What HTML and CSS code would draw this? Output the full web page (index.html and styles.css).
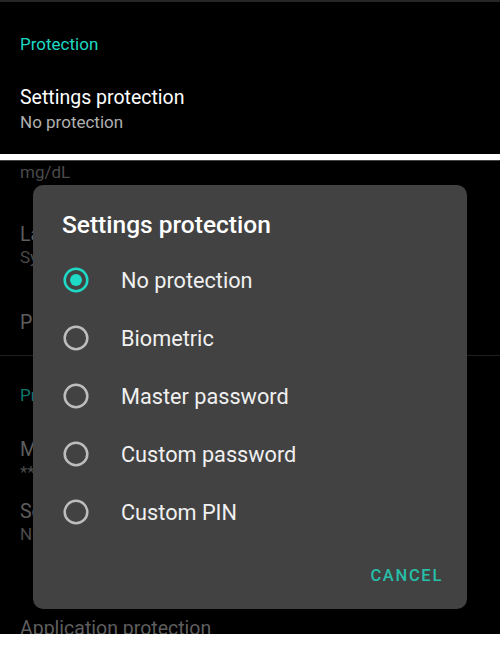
FILE: index.html
```html
<!DOCTYPE html>
<html lang="en">
<head>
  <meta charset="UTF-8" />
  <meta name="viewport" content="width=device-width, initial-scale=1.0"/>
  <title>Settings protection</title>
  <link rel="stylesheet" href="styles.css">
</head>
<body>

  <!-- Top part: the preference as shown before opening -->
  <div class="top-panel">
    <div class="category">Protection</div>
    <div class="pref-title">Settings protection</div>
    <div class="pref-summary">No protection</div>
  </div>

  <div class="white-bar"></div>

  <!-- Dimmed settings screen with dialog -->
  <div class="screen">
    <div class="dim-list">
      <div class="dim-summary first">mg/dL</div>
      <div class="dim-title lang">Language</div>
      <div class="dim-summary">System</div>
      <div class="dim-title single">Privacy policy</div>
      <div class="dim-divider"></div>
      <div class="dim-category">Protection</div>
      <div class="dim-title master">Master password</div>
      <div class="dim-summary stars">********</div>
      <div class="dim-title sp">Settings protection</div>
      <div class="dim-summary">No protection</div>
      <div class="dim-title app">Application protection</div>
    </div>

    <div class="dialog">
      <div class="dialog-title">Settings protection</div>
      <div class="options">
        <div class="option">
          <svg class="radio" width="26" height="26" viewBox="0 0 26 26">
            <circle cx="13" cy="13" r="11.3" fill="none" stroke="#1ed9c6" stroke-width="2.5"/>
            <circle cx="13" cy="13" r="6" fill="#1ed9c6"/>
          </svg>
          <span>No protection</span>
        </div>
        <div class="option">
          <svg class="radio" width="26" height="26" viewBox="0 0 26 26">
            <circle cx="13" cy="13" r="11.3" fill="none" stroke="#bdbdbd" stroke-width="2.5"/>
          </svg>
          <span>Biometric</span>
        </div>
        <div class="option">
          <svg class="radio" width="26" height="26" viewBox="0 0 26 26">
            <circle cx="13" cy="13" r="11.3" fill="none" stroke="#bdbdbd" stroke-width="2.5"/>
          </svg>
          <span>Master password</span>
        </div>
        <div class="option">
          <svg class="radio" width="26" height="26" viewBox="0 0 26 26">
            <circle cx="13" cy="13" r="11.3" fill="none" stroke="#bdbdbd" stroke-width="2.5"/>
          </svg>
          <span>Custom password</span>
        </div>
        <div class="option">
          <svg class="radio" width="26" height="26" viewBox="0 0 26 26">
            <circle cx="13" cy="13" r="11.3" fill="none" stroke="#bdbdbd" stroke-width="2.5"/>
          </svg>
          <span>Custom PIN</span>
        </div>
      </div>
      <div class="actions">
        <button class="cancel">Cancel</button>
      </div>
    </div>
  </div>

  <div class="bottom-bar"></div>

</body>
</html>
```

FILE: styles.css
```css
* {
  box-sizing: border-box;
}

body {
  margin: 0;
  width: 500px;
  height: 646px;
  overflow: hidden;
  background-color: #000;
  font-family: Roboto, "Liberation Sans", sans-serif;
}

/* Top panel */
.top-panel {
  height: 154px;
  border-top: 2px solid #262626;
  padding: 32px 20px 0 20px;
}

.category {
  font-size: 17px;
  line-height: 20px;
  color: #1ed9c6;
}

.pref-title {
  margin-top: 32px;
  font-size: 19.5px;
  line-height: 24px;
  color: #fff;
}

.pref-summary {
  margin-top: 2px;
  font-size: 17px;
  line-height: 20px;
  color: #b0b0b0;
}

.white-bar {
  height: 7px;
  background-color: #fff;
  border-bottom: 1px solid #444;
}

.bottom-bar {
  height: 12px;
  background-color: #fff;
}

/* Dimmed screen behind dialog */
.screen {
  position: relative;
  height: 473px;
  overflow: hidden;
}

.dim-list {
  padding: 0 20px;
}

.dim-title {
  font-size: 19.5px;
  line-height: 24px;
  color: #5e5e5e;
}

.dim-summary {
  font-size: 17px;
  line-height: 20px;
  color: #4a4a4a;
}

.dim-summary.first {
  margin-top: 1px;
}

.dim-title.lang {
  margin-top: 41px;
}

.dim-title.single {
  margin-top: 44px;
}

.dim-divider {
  height: 1px;
  background-color: #1f1f1f;
  margin: 20px -20px 0 -20px;
}

.dim-category {
  margin-top: 29px;
  font-size: 17px;
  line-height: 20px;
  color: #0b7a6e;
}

.dim-title.master {
  margin-top: 33px;
}

.dim-title.sp {
  margin-top: 18px;
}

.dim-title.app {
  margin-top: 73px;
}

/* Dialog */
.dialog {
  position: absolute;
  top: 24px;
  left: 33px;
  width: 434px;
  height: 424px;
  background-color: #424242;
  border-radius: 10px;
  padding-top: 26px;
}

.dialog-title {
  padding-left: 29px;
  font-size: 24.5px;
  line-height: 28px;
  font-weight: 500;
  color: #fff;
}

.options {
  margin-top: 12px;
}

.option {
  display: flex;
  align-items: center;
  height: 58px;
  padding-left: 30px;
}

.radio {
  flex-shrink: 0;
}

.option span {
  margin-left: 32px;
  font-size: 21.7px;
  color: #f0f0f0;
}

.actions {
  display: flex;
  justify-content: flex-end;
  margin-top: 25px;
  padding-right: 24px;
}

.cancel {
  background: none;
  border: none;
  padding: 0;
  font-family: inherit;
  font-size: 16.5px;
  line-height: 20px;
  font-weight: 500;
  letter-spacing: 1.7px;
  text-transform: uppercase;
  color: #26bfa8;
}
```
